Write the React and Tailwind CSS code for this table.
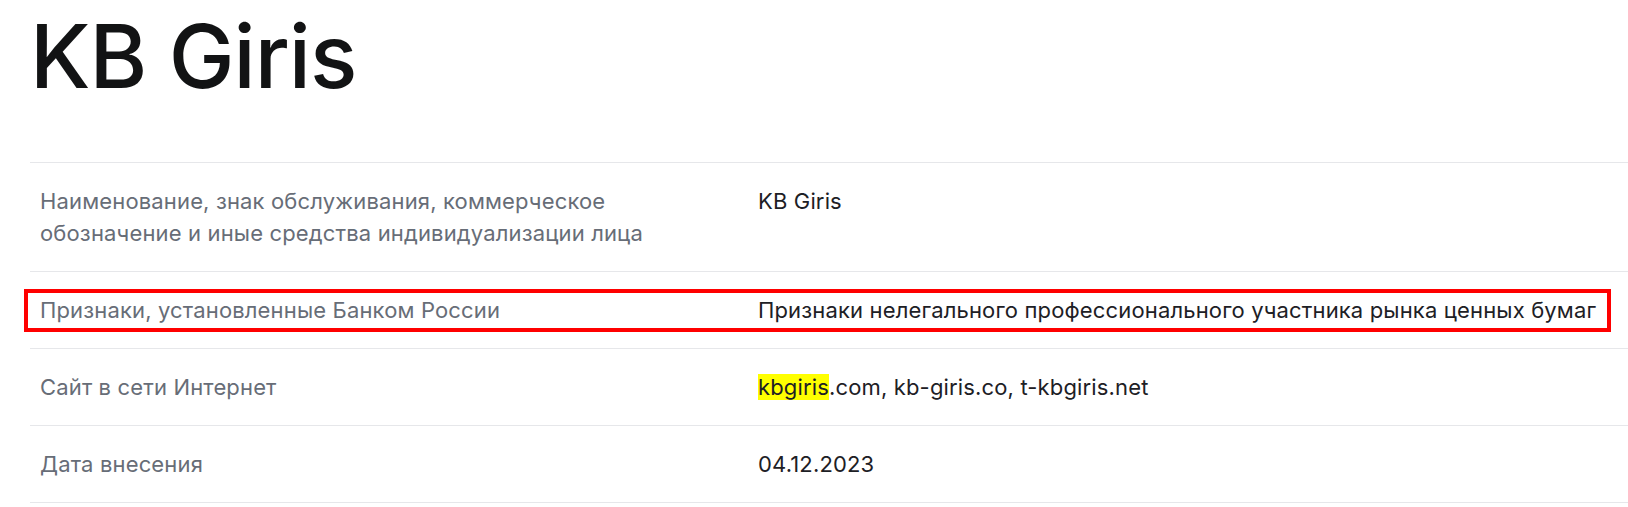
import React from 'react';

const rows = [
  {
    label: 'Наименование, знак обслуживания, коммерческое обозначение и иные средства индивидуализации лица',
    value: 'KB Giris',
  },
  {
    label: 'Признаки, установленные Банком России',
    value: 'Признаки нелегального профессионального участника рынка ценных бумаг',
    marked: true,
  },
  {
    label: 'Сайт в сети Интернет',
    value: (
      <>
        <span className="bg-[#ffff00]">kbgiris</span>.com, kb-giris.co, t-kbgiris.net
      </>
    ),
  },
  { label: 'Дата внесения', value: '04.12.2023' },
];

export default function App() {
  return (
    <div
      className="min-h-[507px] bg-white pl-[30px]"
      style={{ fontFamily: 'Inter, "Noto Sans", sans-serif' }}
    >
      <h1 className="pt-[12px] text-[88px] leading-none font-medium tracking-[-1px] text-[#121314]">
        KB Giris
      </h1>

      {/* таблица */}
      <div className="mt-[62px] border-t border-[#e6e7ea]">
        {rows.map((r, i) => (
          <div
            key={i}
            className="relative flex border-b border-[#e6e7ea] py-[22px] text-[22px] leading-8 tracking-[0.15px]"
          >
            <div className="w-[728px] shrink-0 pl-[10px] pr-[78px] text-[#676d77]">{r.label}</div>
            <div className="text-[#1d2025]">{r.value}</div>
            {r.marked && (
              <div className="pointer-events-none absolute top-[17px] left-[-6px] right-[17px] h-[43px] border-[4px] border-[#ff0000]" />
            )}
          </div>
        ))}
      </div>
    </div>
  );
}
